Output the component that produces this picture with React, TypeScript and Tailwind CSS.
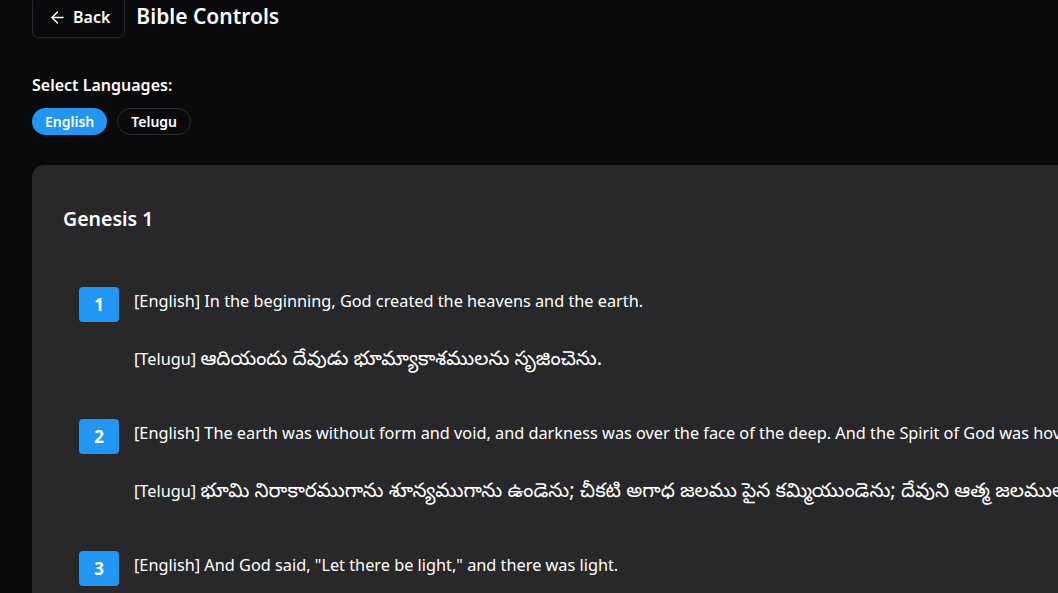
import { ArrowLeft } from 'lucide-react';
import clsx from 'clsx';

type Verse = {
	number: number;
	english: string;
	telugu: string;
};

const verses: Verse[] = [
	{
		number: 1,
		english: 'In the beginning, God created the heavens and the earth.',
		telugu: 'ఆదియందు దేవుడు భూమ్యాకాశములను సృజించెను.',
	},
	{
		number: 2,
		english:
			'The earth was without form and void, and darkness was over the face of the deep. And the Spirit of God was hovering over the face of the waters.',
		telugu:
			'భూమి నిరాకారముగాను శూన్యముగాను ఉండెను; చీకటి అగాధ జలము పైన కమ్మియుండెను; దేవుని ఆత్మ జలములపైన అల్లాడుచుండెను.',
	},
	{
		number: 3,
		english: 'And God said, "Let there be light," and there was light.',
		telugu: 'దేవుడు వెలుగు కమ్మని పలుకగా వెలుగు కలిగెను.',
	},
];

const languages = ['English', 'Telugu'];

const LanguagePill = ({ label, active }: { label: string; active?: boolean }) => (
	<button
		className={clsx(
			'h-[27px] px-[13px] rounded-full text-[14px] font-semibold leading-none',
			active ? 'bg-[#2196f3] text-white' : 'border border-[#2e2e32] text-white',
		)}
	>
		{label}
	</button>
);

const VerseItem = ({ verse }: { verse: Verse }) => (
	<div className="flex items-start gap-[15px] px-4 py-4">
		<div className="flex h-[35px] w-10 shrink-0 items-center justify-center rounded-[4px] bg-[#2196f3] text-[17px] font-bold">
			{verse.number}
		</div>
		<div className="flex flex-col gap-[34px] pt-[2px] text-[16.3px] leading-6 whitespace-nowrap">
			<p>[English] {verse.english}</p>
			<p>
				[Telugu] <span className="text-[20px] leading-none">{verse.telugu}</span>
			</p>
		</div>
	</div>
);

export default function App() {
	return (
		<div
			className="min-h-screen w-full overflow-hidden bg-[#0a0a0c] px-8 text-white"
			style={{ fontFamily: '"Segoe UI", "Noto Sans", "Noto Sans Telugu", sans-serif' }}
		>
			<header className="-mt-[4px] flex items-center gap-[11px]">
				<button className="flex h-[42px] items-center gap-[6px] rounded-md border border-[#26262a] pl-[15px] pr-[14px] text-[16px] font-semibold">
					<ArrowLeft size={19} strokeWidth={1.8} />
					Back
				</button>
				<h1 className="text-[21px] font-semibold">Bible Controls</h1>
			</header>

			<section className="mt-[35px]">
				<p className="text-[16px] font-semibold leading-6">Select Languages:</p>
				<div className="mt-[11px] flex gap-[10px]">
					{languages.map((lang) => (
						<LanguagePill key={lang} label={lang} active={lang === 'English'} />
					))}
				</div>
			</section>

			<main className="mt-[30px] w-[1500px] rounded-xl bg-[#28282b] px-[31px] pt-[40px] pb-8">
				<h2 className="text-[19.5px] font-semibold leading-7">Genesis 1</h2>
				<div className="mt-[38px] flex flex-col gap-[16px]">
					{verses.map((v) => (
						<VerseItem key={v.number} verse={v} />
					))}
				</div>
			</main>
		</div>
	);
}
